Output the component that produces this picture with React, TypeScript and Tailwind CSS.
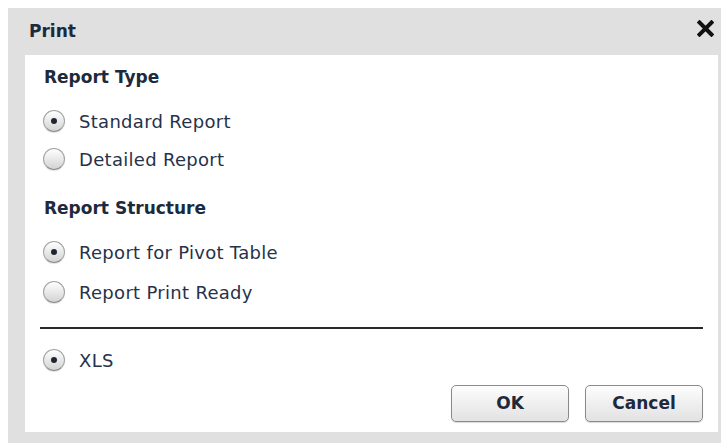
import React from 'react'

interface RadioProps {
    label: string;
    checked?: boolean;
    rowClass?: string;
}

const Radio = ({ label, checked, rowClass }: RadioProps) => {
    return (
        <label className={`flex items-center ${rowClass ?? 'h-[38px]'}`}>
            <span className="ml-[18px] w-[22px] h-[22px] rounded-full border border-[#a3a3a3] border-b-[#8c8c8c] bg-gradient-to-b from-white to-[#d3d3d3] shadow-[0_1px_1px_rgba(0,0,0,0.12)] flex items-center justify-center">
                {checked && <span className="w-[6px] h-[6px] rounded-full bg-[#1f2530]" />}
            </span>
            <span className="ml-[14px] text-[18px] tracking-[0.3px] text-[#26324a]">{label}</span>
        </label>
    )
}

const Button = ({ children }: { children: React.ReactNode }) => (
    <button className="w-[118px] h-[37px] rounded-[5px] border border-[#8a8a8a] bg-gradient-to-b from-[#fdfdfd] to-[#e2e2e2] text-[17px] font-bold text-[#1d2a3c] shadow-[0_1px_1px_rgba(0,0,0,0.15)]">
        {children}
    </button>
)

const App = () => {
    return (
        <div className="w-[721px] h-[443px] bg-white pt-2 pl-2 font-['DejaVu_Sans',sans-serif]">
            <div className="h-[435px] bg-[#e0e0e0] flex flex-col">
                <div className="h-[47px] flex items-center justify-between pl-[21px] pr-[7px]">
                    <span className="text-[17px] font-bold text-[#1d2a3c]">Print</span>
                    <svg width="17" height="17" viewBox="0 0 17 17" className="self-start mt-[12px]">
                        <path d="M2.5 2.5 L14.5 14.5 M14.5 2.5 L2.5 14.5" stroke="#111" strokeWidth="4" strokeLinecap="square" />
                    </svg>
                </div>
                <div className="ml-[17px] mr-[3px] mb-[11px] flex-1 bg-white flex flex-col pt-[13px]">
                    <div className="h-[20px] flex items-center pl-[19px] text-[17px] font-bold text-[#1d2a3c]">Report Type</div>
                    <div className="mt-[14px]">
                        <Radio label="Standard Report" checked />
                        <Radio label="Detailed Report" />
                    </div>
                    <div className="mt-[21px] h-[20px] flex items-center pl-[19px] text-[17px] font-bold text-[#1d2a3c]">Report Structure</div>
                    <div className="mt-[13px]">
                        <Radio label="Report for Pivot Table" checked rowClass="h-[40px]" />
                        <Radio label="Report Print Ready" rowClass="h-[40px]" />
                    </div>
                    <div className="mt-[15px] mx-[15px] h-[2px] bg-[#2a2a2a]" />
                    <div className="mt-[12px]">
                        <Radio label="XLS" checked />
                    </div>
                    <div className="mt-[6px] flex justify-end gap-[16px] pr-[15px]">
                        <Button>OK</Button>
                        <Button>Cancel</Button>
                    </div>
                </div>
            </div>
        </div>
    )
}

export default App
